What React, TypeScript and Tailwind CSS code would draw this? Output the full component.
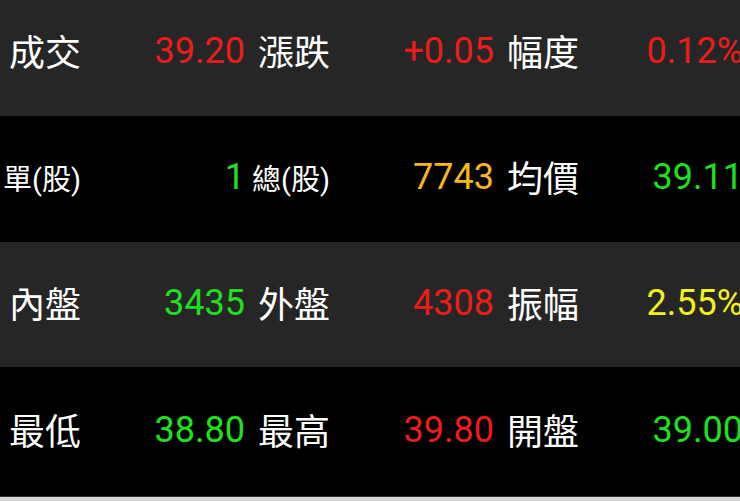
const RED = 'text-[#ec1c1c]'
const GREEN = 'text-[#1fe01f]'

type Cell = { label: string; value: string; color: string; small?: boolean }

const rows: { bg: string; h: string; pb: string; cells: Cell[] }[] = [
  {
    bg: 'bg-[#262626]',
    h: 'h-[116px]',
    pb: 'pb-[15px]',
    cells: [
      { label: '成交', value: '39.20', color: RED },
      { label: '漲跌', value: '+0.05', color: RED },
      { label: '幅度', value: '0.12%', color: RED },
    ],
  },
  {
    bg: 'bg-black',
    h: 'h-[126px]',
    pb: 'pb-[4px]',
    cells: [
      { label: '單(股)', value: '1', color: GREEN, small: true },
      { label: '總(股)', value: '7743', color: 'text-[#f5b71a]', small: true },
      { label: '均價', value: '39.11', color: GREEN },
    ],
  },
  {
    bg: 'bg-[#262626]',
    h: 'h-[125px]',
    pb: 'pb-[4px]',
    cells: [
      { label: '內盤', value: '3435', color: GREEN },
      { label: '外盤', value: '4308', color: RED },
      { label: '振幅', value: '2.55%', color: 'text-[#f2f21c]' },
    ],
  },
  {
    bg: 'bg-black',
    h: 'h-[129px]',
    pb: 'pb-[4px]',
    cells: [
      { label: '最低', value: '38.80', color: GREEN },
      { label: '最高', value: '39.80', color: RED },
      { label: '開盤', value: '39.00', color: GREEN },
    ],
  },
]

export default function App() {
  return (
    <div className="w-[740px] h-[501px] overflow-hidden bg-black font-['Roboto','Noto_Sans_CJK_TC',sans-serif]">
      {rows.map((row, i) => (
        <div key={i} className={`${row.bg} ${row.h} ${row.pb} w-[760px] grid grid-cols-[249px_249px_249px] items-center`}>
          {row.cells.map(cell => (
            <div key={cell.label} className="flex items-center">
              <span
                className={`w-[81px] pt-[6px] text-right text-white leading-none whitespace-nowrap ${
                  cell.small ? 'text-[29px]' : 'text-[36px]'
                }`}
              >
                {cell.label}
              </span>
              <span className={`flex-1 text-right pr-[4px] text-[36px] leading-none whitespace-nowrap ${cell.color}`}>
                {cell.value}
              </span>
            </div>
          ))}
        </div>
      ))}
      <div className="h-[1px] bg-[#333333]" />
      <div className="h-[4px] bg-[#d6d6d6]" />
    </div>
  )
}
